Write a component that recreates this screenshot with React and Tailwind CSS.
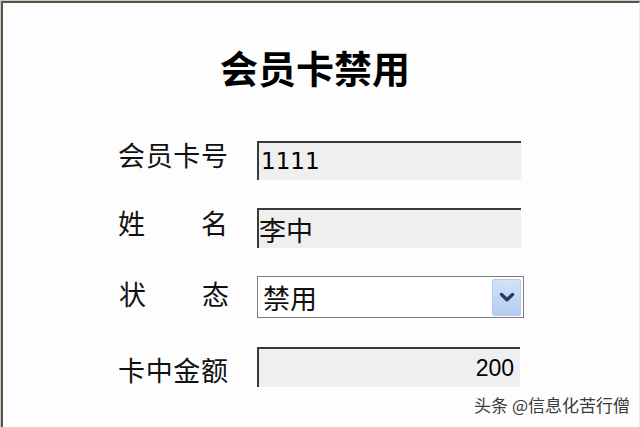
import React from 'react';

const cjk = { fontFamily: '"Noto Sans CJK SC", "Noto Sans", sans-serif' };

const Label = ({ chars, className = '' }) => (
    <div
        className={`w-[110px] flex justify-between text-[27px] leading-none text-[#111] ${className}`}
        style={cjk}
    >
        {chars.map((c, i) => (
            <span key={i}>{c}</span>
        ))}
    </div>
);

const Chevron = () => (
    <svg width="16" height="11" viewBox="0 0 16 11">
        <path d="M2.5 2.5 L8 7.8 L13.5 2.5" fill="none" stroke="#2b3a63" strokeWidth="3.4" strokeLinecap="round" strokeLinejoin="round" />
    </svg>
);

const App = () => {
    return (
        <div className="w-[640px] h-[427px] bg-[#cfcac0] pl-px pt-px overflow-hidden">
            <div className="w-full h-full bg-[#fdfdfd] border-l-2 border-t-2 border-[#55554c] border-r border-r-[#ececec] flex flex-col">
                <h1
                    className="mt-[45px] pr-[12px] text-center text-[38px] font-bold leading-none text-black"
                    style={cjk}
                >
                    会员卡禁用
                </h1>

                <div className="mt-[55px] pl-[115px] flex flex-col gap-[28px]">
                    {/* 会员卡号 */}
                    <div className="flex items-center gap-[29px] h-[39px]">
                        <Label chars={['会', '员', '卡', '号']} className="mb-[12px]" />
                        <div className="w-[264px] h-full bg-[#efefef] border-l-2 border-t-2 border-[#3a3a3a] flex items-center pl-[2px]">
                            <span className="text-[23px] leading-none text-black" style={{ fontFamily: '"DejaVu Sans", sans-serif' }}>
                                1111
                            </span>
                        </div>
                    </div>

                    {/* 姓名 */}
                    <div className="flex items-center gap-[29px] h-[40px]">
                        <Label chars={['姓', '名']} className="mb-[12px]" />
                        <div className="w-[264px] h-full bg-[#efefef] border-l-2 border-t-2 border-[#3a3a3a] flex items-center">
                            <span className="text-[27px] leading-none text-[#111]" style={cjk}>
                                李中
                            </span>
                        </div>
                    </div>

                    {/* 状态 */}
                    <div className="flex items-center gap-[28px] h-[42px]">
                        <Label chars={['状', '态']} className="mb-[8px] ml-px" />
                        <div className="w-[267px] h-full bg-white border border-[#7d7d7d] flex items-center justify-between pl-[5px] pr-[2px]">
                            <span className="text-[27px] leading-none text-[#111]" style={cjk}>
                                禁用
                            </span>
                            <div className="w-[29px] h-[37px] rounded-[2px] border border-[#b3cbee] bg-gradient-to-b from-[#d3e2f8] to-[#b4cdf1] flex items-center justify-center">
                                <Chevron />
                            </div>
                        </div>
                    </div>

                    {/* 卡中金额 */}
                    <div className="flex items-center gap-[29px] h-[40px] mt-px">
                        <Label chars={['卡', '中', '金', '额']} className="mt-[4px]" />
                        <div className="w-[263px] h-full bg-[#efefef] border-l-2 border-t-2 border-[#3a3a3a] flex items-center justify-end pr-[6px]">
                            <span className="text-[23px] leading-none text-black" style={{ fontFamily: '"Liberation Sans", Arial, sans-serif' }}>
                                200
                            </span>
                        </div>
                    </div>
                </div>

                <div className="mt-[9px] flex justify-end pr-[9px]">
                    <span
                        className="text-[17px] leading-none text-[#3a3a3a] [text-shadow:0_0_2px_#fff]"
                        style={cjk}
                    >
                        头条 @信息化苦行僧
                    </span>
                </div>
            </div>
        </div>
    );
};

export default App;
